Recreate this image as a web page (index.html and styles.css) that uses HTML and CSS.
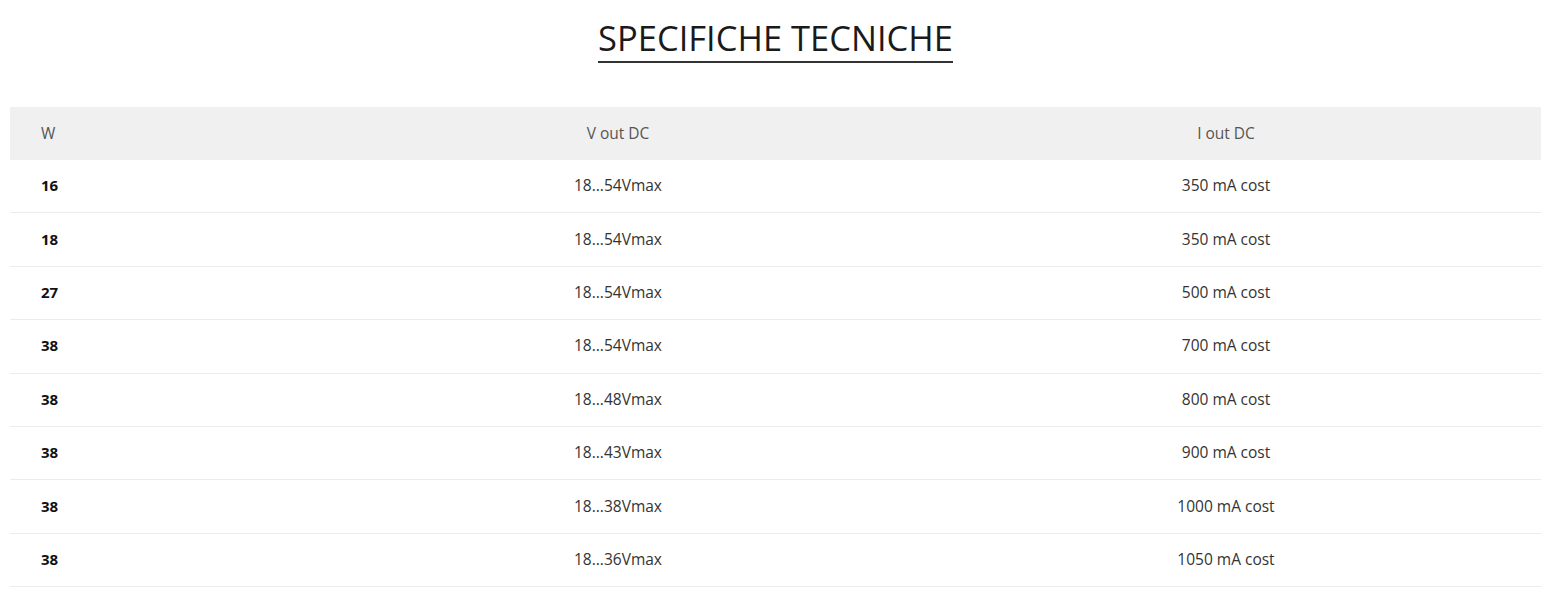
FILE: index.html
```html
<!DOCTYPE html>
<html lang="it">
<head>
<meta charset="utf-8">
<title>Specifiche tecniche</title>
<link rel="stylesheet" href="styles.css">
</head>
<body>
<section class="specs">
  <h2 class="specs-title"><span>SPECIFICHE TECNICHE</span></h2>
  <table class="specs-table">
    <colgroup>
      <col class="c1"><col class="c2"><col class="c3">
    </colgroup>
    <thead>
      <tr><th>W</th><th>V out DC</th><th>I out DC</th></tr>
    </thead>
    <tbody>
      <tr><td>16</td><td>18...54Vmax</td><td>350 mA cost</td></tr>
      <tr><td>18</td><td>18...54Vmax</td><td>350 mA cost</td></tr>
      <tr><td>27</td><td>18...54Vmax</td><td>500 mA cost</td></tr>
      <tr><td>38</td><td>18...54Vmax</td><td>700 mA cost</td></tr>
      <tr><td>38</td><td>18...48Vmax</td><td>800 mA cost</td></tr>
      <tr><td>38</td><td>18...43Vmax</td><td>900 mA cost</td></tr>
      <tr><td>38</td><td>18...38Vmax</td><td>1000 mA cost</td></tr>
      <tr><td>38</td><td>18...36Vmax</td><td>1050 mA cost</td></tr>
    </tbody>
  </table>
</section>
</body>
</html>
```
FILE: styles.css
```css
html, body {
  margin: 0;
  padding: 0;
  background: #fff;
}
body {
  font-family: "Open Sans", "Noto Sans", sans-serif;
  color: #222;
}
.specs {
  padding: 0 13px 0 10px;
}
.specs-title {
  margin: 0;
  padding-top: 17px;
  text-align: center;
  font-weight: 400;
  font-size: 34.5px;
  line-height: 42px;
  color: #1a1a1a;
}
.specs-title span {
  display: inline-block;
  border-bottom: 2px solid #333;
  padding-bottom: 2px;
}
.specs-table {
  width: 100%;
  margin-top: 44px;
  border-collapse: collapse;
  table-layout: fixed;
  font-size: 15.5px;
}
.c1 { width: 315px; }
.c2 { width: 586px; }
.c3 { width: auto; }
.specs-table th {
  background: #f0f0f0;
  font-weight: 400;
  color: #555;
  height: 52px;
  padding: 0 0 1px;
  text-align: center;
}
.specs-table td {
  height: 50.4px;
  padding: 0 0 2px;
  text-align: center;
  border-bottom: 1px solid #ececec;
  color: #333;
}
.specs-table th:first-child,
.specs-table td:first-child {
  text-align: left;
  padding-left: 31px;
}
.specs-table td:first-child {
  font-weight: 700;
  font-size: 15px;
  color: #111;
}
```
